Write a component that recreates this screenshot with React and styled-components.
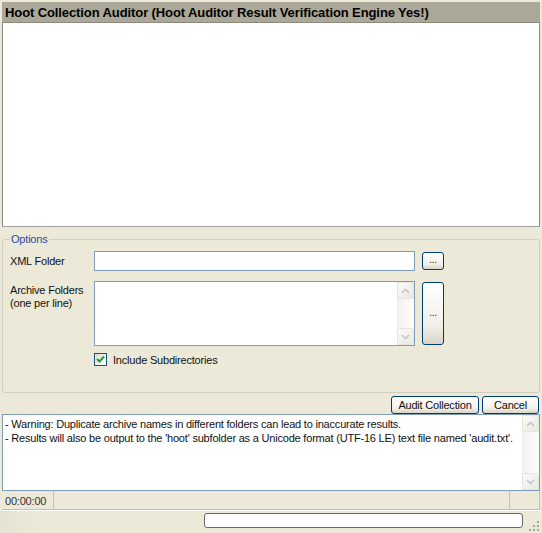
import React from 'react'
import styled, { createGlobalStyle } from 'styled-components'

const GlobalStyle = createGlobalStyle`
  html, body { margin: 0; padding: 0; background: #ece9d8; }
  body { font-family: "Liberation Sans", Arial, sans-serif; font-size: 11px; color: #000; }
`

const Window = styled.div`
  width: 542px;
  height: 533px;
  box-sizing: border-box;
  padding: 2px 2px 0 2px;
  display: flex;
  flex-direction: column;
  background: #ece9d8;
  font-family: "Liberation Sans", Arial, sans-serif;
  font-size: 11px;
  letter-spacing: -0.2px;
`

const TitleBar = styled.div`
  height: 20px;
  background: #aca899;
  border-bottom: 1px solid #8d8a7c;
  display: flex;
  align-items: center;
  padding-left: 3px;
  font-weight: bold;
  font-size: 13px;
  letter-spacing: -0.1px;
  color: #000;
`

const ResultArea = styled.div`
  height: 203px;
  background: #fff;
  border-left: 1px solid #8a8a8a;
  border-right: 1px solid #8a8a8a;
  border-bottom: 1px solid #a0a0a0;
`

const Group = styled.fieldset`
  margin: 6px 0 0 0;
  height: 160px;
  box-sizing: border-box;
  border: 1px solid #d0d0bf;
  border-radius: 3px;
  padding: 6px 8px 0 7px;
  display: flex;
  flex-direction: column;
  gap: 10px;
`

const Legend = styled.legend`
  color: #2e4aa8;
  padding: 0 1px;
  margin-left: 0;
  font-size: 11px;
`

const Row = styled.div`
  display: flex;
  align-items: ${p => (p.top ? 'flex-start' : 'center')};
`

const Label = styled.div`
  width: 84px;
  line-height: 13px;
  color: #111;
  padding-top: ${p => p.pad || 0}px;
`

const TextBox = styled.div`
  width: 321px;
  height: ${p => p.h}px;
  box-sizing: border-box;
  background: #fff;
  border: 1px solid #7f9db9;
  display: flex;
  justify-content: flex-end;
`

const Browse = styled.div`
  margin-left: 7px;
  width: 22px;
  height: ${p => p.h}px;
  box-sizing: border-box;
  border: 1px solid #003c74;
  border-radius: 3px;
  background: linear-gradient(#ffffff, #f0efe9 70%, #d8d5c8);
  display: flex;
  align-items: center;
  justify-content: center;
  font-size: 10px;
  color: #222;
  padding-bottom: 3px;
`

const CheckRow = styled.label`
  display: flex;
  align-items: center;
  margin-left: 84px;
  margin-top: -3px;
  gap: 6px;
  color: #111;
`

const CheckBox = styled.span`
  width: 13px;
  height: 13px;
  box-sizing: border-box;
  border: 1px solid #1c5180;
  background: linear-gradient(135deg, #dcdcd7, #fff);
  display: flex;
  align-items: center;
  justify-content: center;
`

const ButtonRow = styled.div`
  display: flex;
  justify-content: flex-end;
  gap: 3px;
  padding: 3px 1px 0 0;
`

const Button = styled.button`
  height: 18px;
  width: ${p => p.w}px;
  box-sizing: border-box;
  border: 1px solid #003c74;
  border-radius: 3px;
  background: linear-gradient(#ffffff, #f2f1ec 70%, #d6d3c6);
  font-family: "Liberation Sans", Arial, sans-serif;
  font-size: 11px;
  letter-spacing: -0.2px;
  color: #111;
  padding: 0;
`

const Output = styled.div`
  height: 77px;
  box-sizing: border-box;
  background: #fff;
  border: 1px solid #7f9db9;
  display: flex;
`

const OutputText = styled.div`
  flex: 1;
  padding: 2px 0 0 2px;
  line-height: 14px;
  letter-spacing: -0.2px;
  white-space: nowrap;
  overflow: hidden;
  color: #111;
`

const Scroll = styled.div`
  width: 17px;
  background: linear-gradient(90deg, #f3f1ec, #fefefb);
  display: flex;
  flex-direction: column;
  justify-content: space-between;
`

const Arrow = styled.div`
  width: 17px;
  height: 17px;
  box-sizing: border-box;
  border: 1px solid #e6e4dc;
  border-radius: 2px;
  background: linear-gradient(135deg, #fbfbf8, #eae8e0);
  display: flex;
  align-items: center;
  justify-content: center;
`

const StatusBar = styled.div`
  height: 19px;
  display: flex;
  border-bottom: 1px solid #fff;
  box-shadow: inset 0 -1px 0 #c5c2b2;
`

const StatusCell = styled.div`
  display: flex;
  align-items: center;
  padding: 0 4px 0 3px;
  color: #333;
  border-right: 1px solid #c5c2b2;
  width: ${p => p.w || 'auto'};
  flex: ${p => (p.grow ? 1 : 'none')};
`

const BottomBar = styled.div`
  flex: 1;
  display: flex;
  align-items: center;
  justify-content: flex-end;
  background: linear-gradient(90deg, #e6e3d4, #ece9d8 40px);
  margin-left: -2px;
  margin-right: -2px;
  padding-right: 1px;
`

const Progress = styled.div`
  width: 319px;
  height: 15px;
  box-sizing: border-box;
  border: 1px solid #686868;
  border-radius: 3px;
  background: #fff;
  margin-top: -3px;
`

const Grip = styled.svg`
  width: 16px;
  height: 16px;
  align-self: flex-end;
  margin-left: 2px;
`

function Chevron({ up }) {
  return (
    <svg width="9" height="6" viewBox="0 0 9 6">
      <path
        d={up ? 'M1 5 L4.5 1.5 L8 5' : 'M1 1 L4.5 4.5 L8 1'}
        fill="none"
        stroke="#c3c8d2"
        strokeWidth="1.6"
      />
    </svg>
  )
}

function ScrollBar() {
  return (
    <Scroll>
      <Arrow><Chevron up /></Arrow>
      <Arrow><Chevron /></Arrow>
    </Scroll>
  )
}

export default function App() {
  return (
    <Window>
      <GlobalStyle />
      <TitleBar>Hoot Collection Auditor (Hoot Auditor Result Verification Engine Yes!)</TitleBar>
      <ResultArea />
      <Group>
        <Legend>Options</Legend>
        <Row>
          <Label>XML Folder</Label>
          <TextBox h={20} />
          <Browse h={18}>...</Browse>
        </Row>
        <Row top>
          <Label pad={3}>Archive Folders<br />(one per line)</Label>
          <TextBox h={65}>
            <ScrollBar />
          </TextBox>
          <Browse h={63} style={{ marginTop: 1 }}>...</Browse>
        </Row>
        <CheckRow>
          <CheckBox>
            <svg width="9" height="9" viewBox="0 0 9 9">
              <path d="M1 4 L3.5 6.5 L8 1.5" fill="none" stroke="#21a121" strokeWidth="2" />
            </svg>
          </CheckBox>
          Include Subdirectories
        </CheckRow>
      </Group>
      <ButtonRow>
        <Button w={88}>Audit Collection</Button>
        <Button w={57}>Cancel</Button>
      </ButtonRow>
      <Output>
        <OutputText>
          - Warning: Duplicate archive names in different folders can lead to inaccurate results.<br />
          - Results will also be output to the 'hoot' subfolder as a Unicode format (UTF-16 LE) text file named 'audit.txt'.
        </OutputText>
        <ScrollBar />
      </Output>
      <StatusBar>
        <StatusCell w="44px">00:00:00</StatusCell>
        <StatusCell grow />
        <StatusCell w="22px" />
      </StatusBar>
      <BottomBar>
        <Progress />
        <Grip viewBox="0 0 16 16">
          {[[12, 4], [12, 8], [8, 8], [12, 12], [8, 12], [4, 12]].map(([x, y], i) => (
            <rect key={i} x={x} y={y} width="2" height="2" fill="#aca899" />
          ))}
        </Grip>
      </BottomBar>
    </Window>
  )
}
